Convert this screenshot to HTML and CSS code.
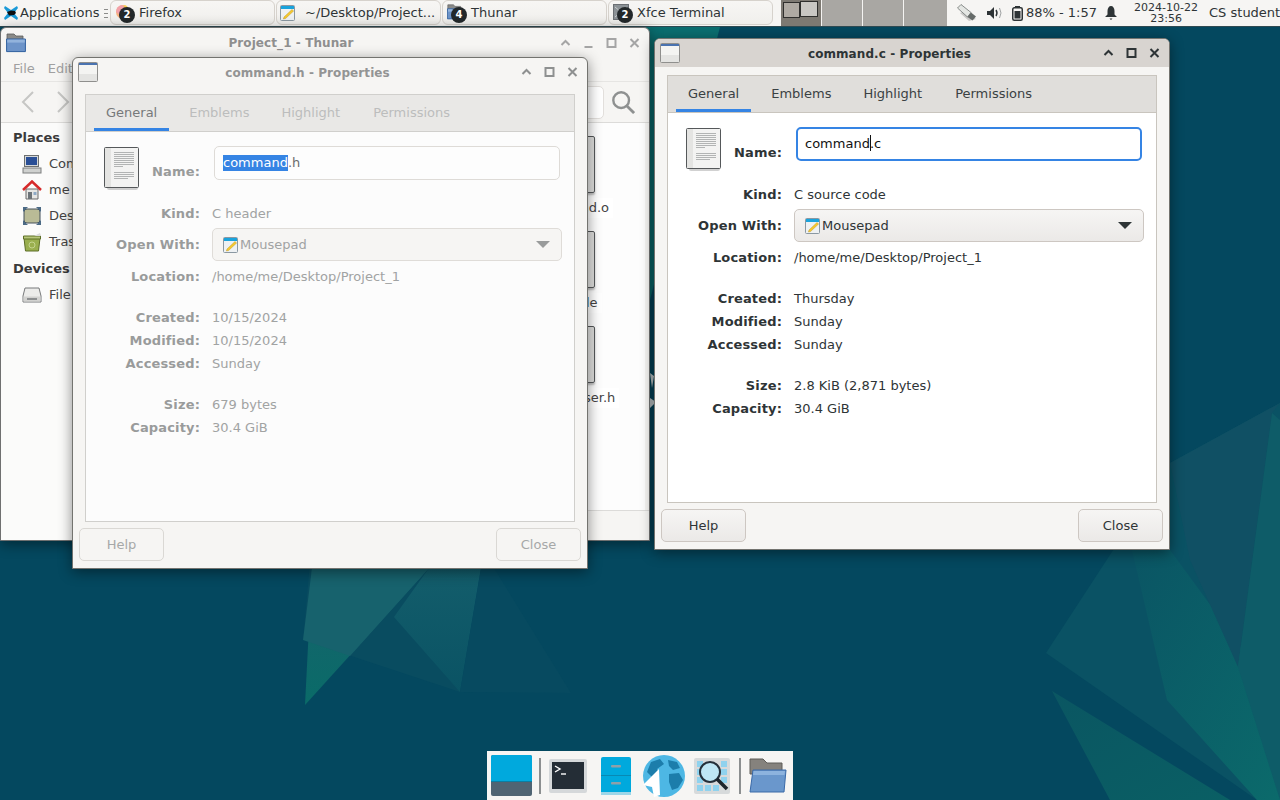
FILE: index.html
```html
<!DOCTYPE html>
<html lang="en">
<head>
<meta charset="utf-8">
<title>Xfce desktop</title>
<link rel="stylesheet" href="styles.css">
</head>
<body>
<svg class="sprites" width="0" height="0" aria-hidden="true">
  <defs>
    <symbol id="i-win" viewBox="0 0 20 20">
      <rect x="0.5" y="0.5" width="19" height="19" rx="1" fill="#f4f4f2" stroke="#8f8f8d"/>
      <rect x="1" y="1" width="18" height="2" fill="#4a73b0"/>
      <rect x="1" y="12" width="18" height="7" fill="#e4e4e2"/>
    </symbol>
    <symbol id="i-doc" viewBox="0 0 36 43">
      <rect x="3" y="38" width="31" height="5" rx="2" fill="#000" opacity=".18"/>
      <rect x="0.5" y="0.5" width="34" height="40" rx="1" fill="#f3f3f2" stroke="#55585a"/>
      <rect x="1" y="1" width="6" height="39" fill="#e4e4e2"/>
      <path d="M10 5.500h20M10 7.500h20M10 9.500h20M10 11.500h20M10 13.500h20M10 15.500h20M10 17.500h20M10 19.500h9M10 25.500h20M10 27.500h20M10 29.500h20M10 31.500h14" stroke="#b2b4b4" stroke-width="1" fill="none"/>
    </symbol>
    <symbol id="i-pad" viewBox="0 0 15 16">
      <rect x="0.5" y="0.5" width="14" height="15" rx="1" fill="#eef1f3" stroke="#8b98a2"/>
      <rect x="1" y="1" width="13" height="3" fill="#1aa3dc"/>
      <path d="M4 12 L12 4.500 L13.600 6 L5.600 13.500 L3.400 14 Z" fill="#f5c92f" stroke="#b58a12" stroke-width=".4"/>
    </symbol>
    <symbol id="i-up" viewBox="0 0 12 12"><path d="M2 8 L6 4 L10 8" fill="none" stroke="currentColor" stroke-width="2"/></symbol>
    <symbol id="i-min" viewBox="0 0 12 12"><path d="M2 10 H10" fill="none" stroke="currentColor" stroke-width="2"/></symbol>
    <symbol id="i-max" viewBox="0 0 12 12"><rect x="2" y="2" width="8" height="8" fill="none" stroke="currentColor" stroke-width="2"/></symbol>
    <symbol id="i-close" viewBox="0 0 12 12"><path d="M2 2 L10 10 M10 2 L2 10" fill="none" stroke="currentColor" stroke-width="2"/></symbol>
    <symbol id="i-folder" viewBox="0 0 20 20">
      <path d="M1 1 h7 l2 2 h7 v6 H1 Z" fill="#8a8a88" stroke="#5c5c5a" stroke-width=".8"/>
      <path d="M0.600 6 H19.400 V18.600 H0.600 Z" fill="#6d94c9" stroke="#2f5f9e"/>
      <rect x="1.200" y="6.600" width="17.600" height="3" fill="#92b3dc"/>
    </symbol>
  </defs>
</svg>

<main class="desktop">
  <svg class="wallpaper" viewBox="0 0 1280 800" aria-hidden="true">
    <defs>
      <linearGradient id="w-a" x1="0" y1="0" x2="0" y2="1"><stop offset="0" stop-color="#17626d"/><stop offset="1" stop-color="#0a6b68"/></linearGradient>
      <linearGradient id="w-b" x1="0" y1="0" x2="1" y2="1"><stop offset="0" stop-color="#0a5564"/><stop offset="1" stop-color="#0b6a6b"/></linearGradient>
      <linearGradient id="w-c" x1="0" y1="0" x2="1" y2="1"><stop offset="0" stop-color="#0a5662"/><stop offset="1" stop-color="#0a5f64"/></linearGradient>
      <linearGradient id="w-d" x1="0" y1="0" x2="0" y2="1"><stop offset="0" stop-color="#135d6b"/><stop offset="1" stop-color="#0a5364"/></linearGradient>
    </defs>
    <path d="M640 27 H720 L650 300 H640 Z" fill="#0b6e70"/>
    <path d="M303 640 L312 540 H481 L460 692 Z" fill="#094c60"/>
    <path d="M394 617 L429 568 H481 L460 692 Z" fill="url(#w-d)"/>
    <path d="M494 568 L571 693 L460 692 L481 568 Z" fill="#074a60"/>
    <path d="M305 705 L312 568 H429 Z" fill="url(#w-a)"/>
    <path d="M303 640 L312 568 H429 L350 656 Z" fill="#17626d"/>
    <path d="M1046 653 L1170 463 L1280 403 V800 H1257 Z" fill="#0a5264"/>
    <path d="M1132 550 L1170 550 L1280 700 V800 H1257 L1167 700 Z" fill="url(#w-b)"/>
    <path d="M1170 463 L1280 403 L1272 413 L1238 667 L1190 560 Z" fill="#105064"/>
    <path d="M1272 413 L1280 420 V800 L1238 667 Z" fill="#0e5c68"/>
    <path d="M1052 691 L1230 800 H1110 Z" fill="url(#w-c)"/>
    <path d="M650 373 L654 376 L652 388 Z M650 398 L656 402 L650 408 Z" fill="#cfd8da"/>
  </svg>

  <header class="panel">
    <svg class="app-logo" viewBox="0 0 16 16" aria-hidden="true">
      <path d="M2 1 L8 5 L14 1 L15 3 L11 8 L15 13 L14 15 L8 11 L2 15 L1 13 L5 8 L1 3 Z" fill="#1a9ad8"/>
      <path d="M4 7 L8 5.500 L12 6 L13 8 L11 10 L6 10.500 Z" fill="#0b0d10"/>
    </svg>
    <span class="app-label">Applications</span>
    <span class="app-sep" aria-hidden="true"></span>
    <nav class="tasks">
      <div class="task">
        <span class="task-icon">
          <svg class="task-svg" viewBox="0 0 16 16" aria-hidden="true"><circle cx="8" cy="8" r="7" fill="#f7b27c"/><path d="M1 8 a7 7 0 0 1 6 -7 l3 4 -5 6 Z" fill="#f2a0a8"/><path d="M9 1 l3 1 -1 4 Z" fill="#f9d54a"/></svg>
          <span class="badge">2</span>
        </span>
        <span class="task-text">Firefox</span>
      </div>
      <div class="task">
        <svg class="pad-task"><use href="#i-pad"/></svg>
        <span class="task-text task-doc">~/Desktop/Project...</span>
      </div>
      <div class="task">
        <span class="task-icon">
          <svg class="task-svg"><use href="#i-folder"/></svg>
          <span class="badge">4</span>
        </span>
        <span class="task-text">Thunar</span>
      </div>
      <div class="task">
        <span class="task-icon">
          <svg class="task-svg" viewBox="0 0 16 16" aria-hidden="true"><rect x="0.500" y="0.500" width="15" height="15" fill="#8c9296" stroke="#6c7074"/><path d="M2 3 L14 13 M14 3 L2 13" stroke="#c8ccce" stroke-width="1"/></svg>
          <span class="badge">2</span>
        </span>
        <span class="task-text">Xfce Terminal</span>
      </div>
    </nav>
    <div class="pager">
      <div class="ws ws-active"><span class="mini mini-a"></span><span class="mini mini-b"></span></div>
      <div class="ws"></div>
      <div class="ws"></div>
      <div class="ws ws-last"></div>
    </div>
    <div class="tray">
      <svg class="tray-usb" viewBox="0 0 20 18" aria-hidden="true">
        <path d="M3 9 L12 17 L19 15 L8 7 Z" fill="#000" opacity=".18"/>
        <path d="M0.500 4 L4 0.500 L14 8.500 L10.500 13 Z" fill="#e4e6e3" stroke="#6f7472" stroke-width=".8"/>
        <path d="M10.500 13 L14 8.500 L19 12.500 L15.500 16.500 Z" fill="#666b69"/>
      </svg>
      <svg class="tray-vol" viewBox="0 0 16 12" aria-hidden="true">
        <path d="M0 4 H3 L7 0 V12 L3 8 H0 Z" fill="#2e3436"/>
        <path d="M9 3 Q11 6 9 9" fill="none" stroke="#2e3436" stroke-width="1.400"/>
        <path d="M12.500 1 Q15.500 6 12.500 11" fill="none" stroke="#a0a3a4" stroke-width="1"/>
      </svg>
      <svg class="tray-bat" viewBox="0 0 11 15" aria-hidden="true">
        <rect x="3" y="0" width="5" height="2" fill="#2e3436"/>
        <rect x="0.750" y="1.750" width="9.500" height="12.500" rx="1.500" fill="none" stroke="#2e3436" stroke-width="1.500"/>
        <rect x="2.500" y="5" width="6" height="7.500" fill="#2e3436"/>
      </svg>
      <span class="tray-text">88% - 1:57</span>
      <svg class="tray-bell" viewBox="0 0 12 14" aria-hidden="true">
        <path d="M6 0 C8 0 9.500 2 9.500 5 V8.500 L12 11 H0 L2.500 8.500 V5 C2.500 2 4 0 6 0 Z M4.500 12.500 H7.500 L6 14 Z" fill="#2e3436"/>
      </svg>
      <span class="clock">2024-10-22<br>23:56</span>
      <span class="user">CS student</span>
    </div>
  </header>

  <section class="win thunar">
    <div class="titlebar">
      <svg class="thunar-icon"><use href="#i-folder"/></svg>
      <span class="title">Project_1 - Thunar</span>
      <span class="ctrls">
        <svg class="ctrl"><use href="#i-up"/></svg>
        <svg class="ctrl"><use href="#i-min"/></svg>
        <svg class="ctrl"><use href="#i-max"/></svg>
        <svg class="ctrl"><use href="#i-close"/></svg>
      </span>
    </div>
    <div class="menubar"><span>File</span><span>Edit</span></div>
    <div class="toolbar">
      <svg class="nav-arrow" viewBox="0 0 14 24" aria-hidden="true"><path d="M12 2 L2 12 L12 22" fill="none" stroke="#c6c6c4" stroke-width="2"/></svg>
      <svg class="nav-arrow nav-fwd" viewBox="0 0 14 24" aria-hidden="true"><path d="M2 2 L12 12 L2 22" fill="none" stroke="#c6c6c4" stroke-width="2"/></svg>
      <span class="path-entry"></span>
      <svg class="search" viewBox="0 0 26 26" aria-hidden="true"><circle cx="11" cy="11" r="8.500" fill="none" stroke="#8e9090" stroke-width="2.600"/><path d="M17 17 L25 25" stroke="#8e9090" stroke-width="3"/></svg>
    </div>
    <div class="th-body">
      <aside class="sidebar">
        <h3 class="side-head">Places</h3>
        <div class="side-item">
          <svg class="side-icon" viewBox="0 0 20 20" aria-hidden="true"><rect x="2.500" y="1.500" width="14" height="11" fill="#d6d8d8" stroke="#6d7070"/><rect x="4" y="3" width="11" height="8" fill="#2a4f96"/><rect x="1" y="14" width="18" height="5" fill="#cfd1cf" stroke="#7c7e7e"/></svg>
          <span>Computer</span>
        </div>
        <div class="side-item">
          <svg class="side-icon" viewBox="0 0 20 20" aria-hidden="true"><path d="M4 9 H16 V19 H4 Z" fill="#e6e6e4" stroke="#6b6b6b"/><rect x="6" y="12" width="4" height="7" fill="#6c7378"/><rect x="11.500" y="12" width="3" height="3" fill="#8eaac6"/><path d="M1 10 L10 1.500 L19 10" fill="none" stroke="#d62a2a" stroke-width="2.500"/></svg>
          <span>me</span>
        </div>
        <div class="side-item">
          <svg class="side-icon" viewBox="0 0 20 20" aria-hidden="true"><rect x="2" y="3" width="16" height="14" rx="3" fill="#b9bb96" stroke="#44505a"/><path d="M1 1 H6 L1 6 Z M19 1 H14 L19 6 Z M1 19 H6 L1 14 Z M19 19 H14 L19 14 Z" fill="#4b6a85"/></svg>
          <span>Desktop</span>
        </div>
        <div class="side-item">
          <svg class="side-icon" viewBox="0 0 20 20" aria-hidden="true"><path d="M2 6 H18 L16.500 19 H3.500 Z" fill="#9aaf4e" stroke="#5d6e26"/><path d="M1.500 4 H18.500 V7 H1.500 Z" fill="#b6c679" stroke="#5d6e26"/><circle cx="10" cy="13" r="3" fill="none" stroke="#c5d48e"/><path d="M12 4 L18 1 L19 4 Z" fill="#dadada"/></svg>
          <span>Trash</span>
        </div>
        <h3 class="side-head side-head-dev">Devices</h3>
        <div class="side-item">
          <svg class="side-icon" viewBox="0 0 20 20" aria-hidden="true"><path d="M3 3 H17 L19 11 V17 H1 V11 Z" fill="#ececea" stroke="#77797a"/><rect x="1.500" y="11.500" width="17" height="5" fill="#d2d2d0"/><rect x="5" y="13" width="10" height="2" fill="#8d8f90"/></svg>
          <span>File System</span>
        </div>
      </aside>
      <div class="th-main">
        <div class="files">
          <figure class="file">
            <span class="file-icon"></span>
            <figcaption class="file-name">command.o</figcaption>
          </figure>
          <figure class="file">
            <span class="file-icon"></span>
            <figcaption class="file-name">Makefile</figcaption>
          </figure>
          <figure class="file">
            <span class="file-icon"></span>
            <figcaption class="file-name">shell_parser.h</figcaption>
          </figure>
        </div>
        <div class="statusbar"></div>
      </div>
    </div>
  </section>

  <section class="win dlg dlg-h dim">
    <div class="titlebar">
      <svg class="win-icon"><use href="#i-win"/></svg>
      <span class="title">command.h - Properties</span>
      <span class="ctrls">
        <svg class="ctrl"><use href="#i-up"/></svg>
        <svg class="ctrl"><use href="#i-max"/></svg>
        <svg class="ctrl"><use href="#i-close"/></svg>
      </span>
    </div>
    <div class="notebook">
      <div class="tabs">
        <span class="tab tab-on">General</span><span class="tab">Emblems</span><span class="tab">Highlight</span><span class="tab">Permissions</span>
      </div>
      <div class="form">
        <div class="row-name">
          <svg class="doc-icon"><use href="#i-doc"/></svg>
          <span class="lab lab-name">Name:</span>
          <div class="entry"><span class="sel">command</span>.h</div>
        </div>
        <div class="row"><span class="lab">Kind:</span><span class="val">C header</span></div>
        <div class="row row-combo"><span class="lab">Open With:</span>
          <div class="combo"><svg class="pad-icon"><use href="#i-pad"/></svg><span class="combo-text">Mousepad</span><span class="arrow"></span></div>
        </div>
        <div class="row"><span class="lab">Location:</span><span class="val">/home/me/Desktop/Project_1</span></div>
        <div class="row row-gap"><span class="lab">Created:</span><span class="val">10/15/2024</span></div>
        <div class="row"><span class="lab">Modified:</span><span class="val">10/15/2024</span></div>
        <div class="row"><span class="lab">Accessed:</span><span class="val">Sunday</span></div>
        <div class="row row-gap"><span class="lab">Size:</span><span class="val">679 bytes</span></div>
        <div class="row"><span class="lab">Capacity:</span><span class="val">30.4 GiB</span></div>
      </div>
    </div>
    <div class="actions"><button class="btn" type="button">Help</button><button class="btn" type="button">Close</button></div>
  </section>

  <section class="win dlg dlg-c">
    <div class="titlebar">
      <svg class="win-icon"><use href="#i-win"/></svg>
      <span class="title">command.c - Properties</span>
      <span class="ctrls">
        <svg class="ctrl"><use href="#i-up"/></svg>
        <svg class="ctrl"><use href="#i-max"/></svg>
        <svg class="ctrl"><use href="#i-close"/></svg>
      </span>
    </div>
    <div class="notebook">
      <div class="tabs">
        <span class="tab tab-on">General</span><span class="tab">Emblems</span><span class="tab">Highlight</span><span class="tab">Permissions</span>
      </div>
      <div class="form">
        <div class="row-name">
          <svg class="doc-icon"><use href="#i-doc"/></svg>
          <span class="lab lab-name">Name:</span>
          <div class="entry entry-focus">command<span class="caret"></span>.c</div>
        </div>
        <div class="row"><span class="lab">Kind:</span><span class="val">C source code</span></div>
        <div class="row row-combo"><span class="lab">Open With:</span>
          <div class="combo"><svg class="pad-icon"><use href="#i-pad"/></svg><span class="combo-text">Mousepad</span><span class="arrow"></span></div>
        </div>
        <div class="row"><span class="lab">Location:</span><span class="val">/home/me/Desktop/Project_1</span></div>
        <div class="row row-gap"><span class="lab">Created:</span><span class="val">Thursday</span></div>
        <div class="row"><span class="lab">Modified:</span><span class="val">Sunday</span></div>
        <div class="row"><span class="lab">Accessed:</span><span class="val">Sunday</span></div>
        <div class="row row-gap"><span class="lab">Size:</span><span class="val">2.8 KiB (2,871 bytes)</span></div>
        <div class="row"><span class="lab">Capacity:</span><span class="val">30.4 GiB</span></div>
      </div>
    </div>
    <div class="actions"><button class="btn" type="button">Help</button><button class="btn" type="button">Close</button></div>
  </section>

  <footer class="dock">
    <svg class="dock-panel" viewBox="0 0 41 41" aria-hidden="true">
      <rect width="41" height="41" rx="2" fill="#4f6473"/>
      <path d="M2 0 H39 Q41 0 41 2 V27 H0 V2 Q0 0 2 0 Z" fill="#00a9dd"/>
      <rect y="26" width="41" height="1" fill="#0b7ea3"/>
    </svg>
    <span class="dock-sep dock-sep-a"></span>
    <svg class="dock-term" viewBox="0 0 38 34" aria-hidden="true">
      <rect width="38" height="34" rx="2" fill="#d5d8da"/>
      <rect x="3" y="3" width="32" height="27" fill="#242d36"/>
      <path d="M6 7 L11 10 L6 13" fill="none" stroke="#fff" stroke-width="1.400"/>
      <path d="M12 15 H17" stroke="#fff" stroke-width="1.400"/>
    </svg>
    <svg class="dock-cab" viewBox="0 0 30 38" aria-hidden="true">
      <rect width="30" height="38" rx="2" fill="#00a9dd"/>
      <rect y="18" width="30" height="1" fill="#0889b4"/>
      <rect y="35" width="30" height="3" fill="#9dd6e8"/>
      <rect x="10" y="8" width="10" height="2.500" rx="1" fill="#8fa0a8"/>
      <rect x="10" y="25" width="10" height="2.500" rx="1" fill="#8fa0a8"/>
    </svg>
    <svg class="dock-globe" viewBox="0 0 42 42" aria-hidden="true">
      <circle cx="21" cy="21" r="21" fill="#4db7e4"/>
      <path d="M8 7 L17 4 L21 9 L14 14 L16 19 L9 22 L4 17 Z M25 5 L34 7 L37 13 L30 15 L26 11 Z M26 19 L36 18 L40 25 L35 33 L29 35 L26 27 Z M8 27 L14 29 L13 34 L9 32 Z" fill="#1c7dab"/>
      <path d="M16 14 L0 30 L9 32 L11 42 L17 40 Z" fill="#fff"/>
    </svg>
    <svg class="dock-search" viewBox="0 0 36 36" aria-hidden="true">
      <rect width="36" height="36" rx="2" fill="#d7dadb"/>
      <path d="M3 3h6v6H3z M3 11h6v6H3z M3 19h6v6H3z M3 27h6v6H3z M11 27h6v6h-6z M19 27h6v6h-6z M27 3h6v6h-6z M27 11h6v6h-6z M27 19h6v6h-6z" fill="#8fd2ee"/>
      <circle cx="16" cy="14" r="10" fill="#bfe7f5" stroke="#25303a" stroke-width="2"/>
      <path d="M23 21 L33 31" stroke="#1d252c" stroke-width="3.500"/>
    </svg>
    <span class="dock-sep dock-sep-b"></span>
    <svg class="dock-folder" viewBox="0 0 38 36" aria-hidden="true">
      <path d="M1 1 H14 L18 5 H33 V16 H1 Z" fill="#85827d" stroke="#5e5c58"/>
      <path d="M4 12 H37 L35 34 H1 Z" fill="#6a97cc" stroke="#3a6aa8"/>
      <path d="M4.500 13 H36 L35.500 17 H4 Z" fill="#8db3de"/>
    </svg>
  </footer>
</main>
</body>
</html>
```
FILE: styles.css
```css
* { box-sizing: border-box; }
html, body { margin: 0; padding: 0; height: 100%; overflow: hidden; }
body { font: 13px/1.2 "DejaVu Sans", sans-serif; color: #2e3436; }
.sprites { position: absolute; }

.desktop {
  position: relative;
  width: 1280px;
  height: 800px;
  overflow: hidden;
  background: #04485f;
}
.wallpaper { position: absolute; inset: 0; width: 1280px; height: 800px; }

/* Top panel */
.panel {
  position: relative;
  display: flex;
  align-items: center;
  height: 26px;
  background: #f6f5f3;
  box-shadow: 0 1px 0 #2f4a52;
}
.app-logo { width: 16px; height: 16px; margin-left: 3px; flex: none; }
.app-label { margin-left: 1px; width: 81px; white-space: nowrap; }
.app-sep {
  width: 4px;
  height: 9px;
  margin-left: 3px;
  margin-right: 2px;
  border-top: 1px solid #8c8c8a;
  border-bottom: 1px solid #8c8c8a;
  background: linear-gradient(#8c8c8a, #8c8c8a) center / 100% 1px no-repeat;
  flex: none;
}
.tasks { display: flex; gap: 1px; height: 26px; flex: none; }
.task {
  display: flex;
  align-items: center;
  width: 165px;
  height: 25px;
  padding-left: 4px;
  background: linear-gradient(#f7f6f4, #f0efec);
  border: 1px solid #d6d2cc;
  border-radius: 6px;
  white-space: nowrap;
  overflow: hidden;
}
.task-icon { position: relative; width: 22px; height: 23px; flex: none; display: block; }
.task-svg { position: absolute; left: 0; top: 3px; width: 16px; height: 16px; }
.badge {
  position: absolute;
  left: 4px;
  top: 6px;
  width: 16px;
  height: 16px;
  border-radius: 50%;
  background: #23282a;
  color: #fff;
  font-size: 10px;
  font-weight: 700;
  line-height: 16px;
  text-align: center;
}
.task-text { margin-left: 2px; }
.pad-task { width: 15px; height: 16px; margin-left: -1px; flex: none; }
.task-doc { margin-left: 10px; }

.pager { display: flex; margin-left: 8px; height: 26px; flex: none; }
.ws { position: relative; width: 41px; background: #a9a7a3; border-right: 1px solid #f5f4f2; }
.ws-last { width: 43px; border-right: 0; }
.ws-active { background: #7d7972; }
.mini { position: absolute; top: 2px; height: 16px; border: 1px solid #2f2f2d; }
.mini-a { left: 2px; width: 17px; background: #afaaa3; }
.mini-b { left: 19px; width: 18px; top: 1px; background: #c9c7c3; }

.tray { display: flex; align-items: center; flex: 1; min-width: 0; }
.tray-usb { width: 20px; height: 18px; margin-left: 10px; flex: none; }
.tray-vol { width: 16px; height: 12px; margin-left: 10px; flex: none; }
.tray-bat { width: 11px; height: 15px; margin-left: 9px; flex: none; }
.tray-text { margin-left: 3px; white-space: nowrap; }
.tray-bell { width: 12px; height: 14px; margin-left: 8px; flex: none; }
.clock { width: 64px; margin-left: 17px; font-size: 11px; line-height: 11px; text-align: center; white-space: nowrap; flex: none; }
.user { margin-left: 11px; white-space: nowrap; }

/* Windows */
.win {
  position: absolute;
  display: flex;
  flex-direction: column;
  background: #f6f5f3;
  border: 1px solid #777774;
  border-radius: 6px 6px 0 0;
  box-shadow: 0 3px 14px rgba(0, 0, 0, .45);
}
.titlebar { display: flex; align-items: center; height: 28px; flex: none; }
.title { flex: 1; padding: 2px 0 0 2px; text-align: center; font-size: 12px; font-weight: 700; letter-spacing: .08px; white-space: nowrap; }
.ctrls { display: flex; padding-right: 3px; flex: none; }
.ctrl { width: 23px; height: 12px; display: block; }
.win-icon { width: 20px; height: 20px; margin-left: 5px; flex: none; }

.thunar {
  left: 0; top: 27px; width: 650px; height: 514px;
  background: #f6f5f3;
  color: #333;
  border-color: #6f7070;
}
.thunar .titlebar { height: 29px; }
.thunar .title { color: #8f8f8f; }
.thunar .ctrl { color: #a5a5a5; }
.thunar-icon { width: 20px; height: 20px; margin-left: 5px; flex: none; }
.menubar { display: flex; gap: 13px; height: 24px; padding-left: 12px; color: #a0a0a0; align-items: center; flex: none; }
.toolbar { position: relative; display: flex; align-items: center; height: 42px; padding-left: 20px; border-top: 1px solid #e6e5e3; border-bottom: 1px solid #dcdbd9; flex: none; }
.nav-arrow { width: 14px; height: 24px; flex: none; }
.nav-fwd { margin-left: 21px; }
.path-entry { height: 33px; width: 60px; margin-left: auto; margin-right: 7px; border: 1px solid #e2dfdc; border-radius: 5px; background: #fff; }
.search { width: 24px; height: 24px; margin-right: 14px; flex: none; }
.th-body { display: flex; flex: 1; min-height: 0; }
.sidebar { width: 140px; padding-top: 6px; background: #fbfbfa; flex: none; }
.side-head { margin: 0; height: 22px; padding-left: 12px; font-size: 13px; font-weight: 700; line-height: 17px; color: #3a3a3a; }
.side-head-dev { margin-top: 5px; }
.side-item { display: flex; align-items: center; gap: 8px; height: 26px; padding-left: 22px; white-space: nowrap; color: #444; }
.side-icon { width: 20px; height: 20px; flex: none; margin-left: -1px; margin-right: -1px; }
.th-main { display: flex; flex-direction: column; flex: 1; min-width: 0; }
.files { flex: 1; min-height: 0; background: #fdfdfd; padding: 12px 0 0 378px; margin-right: 4px; }
.file { margin: 0; display: flex; flex-direction: column; align-items: center; width: 103px; height: 95px; }
.file-icon { display: block; width: 49px; height: 57px; margin-top: 1px; border: 1px solid #55585a; border-radius: 2px; background: linear-gradient(90deg, #f1f1f0 70%, #dcdcda); box-shadow: 0 2px 2px rgba(0, 0, 0, .25); flex: none; }
.file-name { margin-top: 5px; padding: 2px 4px; background: #fff; color: #444; white-space: nowrap; }
.statusbar { height: 30px; border-top: 1px solid #dcdbd9; background: #f6f5f3; flex: none; }

.dlg { width: 516px; height: 512px; border-color: #73736f; }
.dlg-h { left: 72px; top: 57px; }
.dlg-c { left: 654px; top: 38px; }
.dlg-c .titlebar { background: #d8d4d0; border-radius: 5px 5px 0 0; }
.dlg-c .ctrl { color: #2e3436; }
.dlg-c .title { color: #2e3436; }
.dim .title { color: #939494; }
.dim .ctrl { color: #8e9090; }

.notebook {
  display: flex;
  flex-direction: column;
  height: 428px;
  margin: 8px 12px 0;
  border: 1px solid #c9c5be;
  background: #fff;
  flex: none;
}
.tabs { display: flex; gap: 8px; height: 37px; padding-left: 8px; background: #e0dedb; border-bottom: 1px solid #c9c5be; flex: none; }
.tab { display: flex; align-items: center; padding: 0 12px; height: 36px; color: #3a4143; white-space: nowrap; }
.tab:last-child { margin-left: 1px; }
.tab-on { box-shadow: inset 0 -3px 0 #3584e4; }
.form { padding: 14px 0 0; }
.row-name { display: flex; align-items: flex-start; height: 44px; margin-bottom: 12px; }
.doc-icon { width: 36px; height: 43px; margin: 1px 0 0 18px; flex: none; }
.lab { width: 114px; text-align: right; font-weight: 700; letter-spacing: .15px; color: #2e3436; white-space: nowrap; flex: none; }
.lab-name { width: 60px; margin-top: 18px; }
.entry {
  width: 346px;
  height: 34px;
  margin-left: 14px;
  padding: 0 8px;
  line-height: 32px;
  background: #fff;
  border: 1px solid #d5d0cb;
  border-radius: 5px;
  white-space: nowrap;
  flex: none;
}
.entry-focus { padding: 0 7px; line-height: 30px; border: 2px solid #3584e4; color: #111; }
.caret { display: inline-block; width: 1px; height: 16px; margin-right: -1px; background: #111; vertical-align: -3px; }
.sel { display: inline-block; line-height: 16px; background: #3584e4; color: #fff; }
.row { display: flex; align-items: center; gap: 12px; height: 23px; }
.row-combo { height: 33px; margin: 3px 0 4px; }
.row-gap { margin-top: 18px; }
.val { white-space: nowrap; color: #2e3436; }
.combo {
  display: flex;
  align-items: center;
  width: 350px;
  height: 33px;
  padding: 0 10px;
  background: linear-gradient(#f6f5f4, #ebe9e7);
  border: 1px solid #cdc7c2;
  border-radius: 5px;
  flex: none;
}
.pad-icon { width: 15px; height: 16px; flex: none; }
.combo-text { margin-left: 2px; flex: 1; }
.arrow { width: 0; height: 0; border-left: 7px solid transparent; border-right: 7px solid transparent; border-top: 7px solid #2e3436; margin-right: 1px; }
.actions { display: flex; justify-content: space-between; padding: 6px 6px 0; flex: none; }
.btn {
  width: 85px;
  height: 33px;
  padding: 0;
  background: linear-gradient(#f6f5f4, #ebe9e7);
  border: 1px solid #cdc7c2;
  border-radius: 5px;
  font: 13px "DejaVu Sans", sans-serif;
  color: #2e3436;
}

/* Unfocused dialog */
.dim .notebook { background: #fcfcfc; border-color: #d0cfcc; }
.dim .tabs { background: #e9e8e6; border-color: #d0cfcc; }
.dim .tab { color: #bcbdbd; }
.dim .tab-on { color: #77797a; }
.dim .lab { color: #999b9b; }
.dim .val { color: #a1a3a3; }
.dim .entry { color: #6a6c6c; background: #fdfdfd; border-color: #dedbd7; }
.dim .sel { color: #fff; }
.dim .combo { background: #f6f5f3; border-color: #dfdcd8; }
.dim .combo-text { color: #a1a3a3; }
.dim .arrow { border-top-color: #999b9b; }
.dim .btn { background: #f6f5f3; border-color: #dad8d4; color: #a6a8a8; }

/* Dock */
.dock {
  position: absolute;
  left: 487px;
  bottom: 0;
  width: 306px;
  height: 49px;
  display: flex;
  align-items: center;
  background: #f6f5f3;
}
.dock-panel { width: 41px; height: 41px; margin-left: 4px; flex: none; }
.dock-sep { width: 2px; height: 36px; background: #8c8f90; flex: none; }
.dock-sep-a { margin-left: 7px; }
.dock-term { width: 38px; height: 34px; margin-left: 8px; flex: none; }
.dock-cab { width: 30px; height: 38px; margin-left: 14px; flex: none; }
.dock-globe { width: 42px; height: 42px; margin-left: 12px; flex: none; }
.dock-search { width: 36px; height: 36px; margin-left: 9px; flex: none; }
.dock-sep-b { margin-left: 9px; }
.dock-folder { width: 38px; height: 36px; margin-left: 8px; flex: none; }
```
